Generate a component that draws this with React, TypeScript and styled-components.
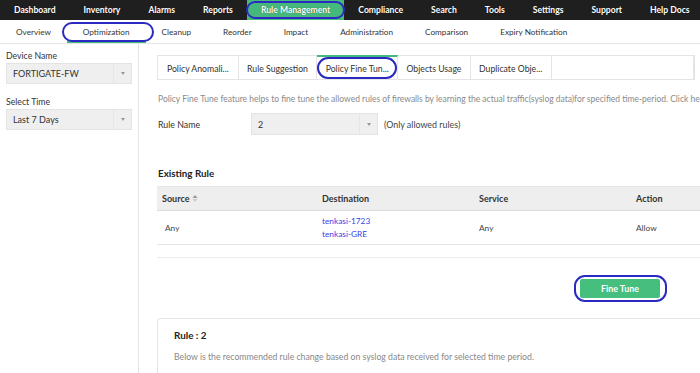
import React from "react";
import styled, { createGlobalStyle, css } from "styled-components";

const GlobalStyle = createGlobalStyle`
  html, body { margin: 0; padding: 0; }
  body {
    width: 700px;
    height: 373px;
    overflow: hidden;
    background: #ffffff;
    font-family: Lato, "Open Sans", sans-serif;
    color: #333;
  }
  * { box-sizing: border-box; }
`;

const ANNOT = "#2a2ac2";

const annotation = (t: number, r: number, b: number, l: number) => css`
  position: relative;
  &::after {
    content: "";
    position: absolute;
    top: ${t}px;
    right: ${r}px;
    bottom: ${b}px;
    left: ${l}px;
    border: 2.5px solid ${ANNOT};
    border-radius: 11px;
    pointer-events: none;
  }
`;

const Page = styled.div`
  width: 700px;
  height: 373px;
  overflow: hidden;
  display: flex;
  flex-direction: column;
`;

const TopNav = styled.nav`
  display: flex;
  height: 20px;
  background: #1f1f1f;
  flex-shrink: 0;
`;

const TopItem = styled.div<{ $active?: boolean }>`
  display: flex;
  align-items: center;
  padding: 0 14px;
  height: 20px;
  font-size: 8.6px;
  font-weight: 700;
  color: #fff;
  white-space: nowrap;
  text-shadow: 0 0 1px rgba(0, 0, 0, 0.6);
  ${(p) =>
    p.$active &&
    css`
      background: #45b97c;
      ${annotation(1, -1, 1, -1)}
    `}
`;

const SubNav = styled.nav`
  display: flex;
  height: 24px;
  background: #fff;
  border-bottom: 1px solid #e6e6e6;
  flex-shrink: 0;
`;

const SubItem = styled.div<{ $active?: boolean }>`
  display: flex;
  align-items: center;
  padding: 2px 16px 0;
  font-size: 8.2px;
  color: #333;
  white-space: nowrap;
  border-bottom: 2px solid transparent;
  ${(p) =>
    p.$active &&
    css`
      border-bottom-color: #45b97c;
      ${annotation(2, -8, -1, -5)}
    `}
`;

const Body = styled.div`
  display: flex;
  flex: 1;
  min-height: 0;
`;

const Sidebar = styled.aside`
  width: 139px;
  flex-shrink: 0;
  border-right: 1px solid #e4e4e4;
  padding: 6px 6px 0 6px;
  display: flex;
  flex-direction: column;
`;

const FieldLabel = styled.div`
  font-size: 8.7px;
  color: #333;
  height: 12px;
  line-height: 12px;
  margin-bottom: 1px;
`;

const SelectBox = styled.div<{ $width?: number; $height?: number; $gap?: number }>`
  display: flex;
  align-items: center;
  height: ${(p) => p.$height ?? 21}px;
  width: ${(p) => (p.$width ? `${p.$width}px` : "100%")};
  background: #efefef;
  border: 1px solid #e3e3e3;
  font-size: 9px;
  color: #333;
  margin-bottom: ${(p) => p.$gap ?? 0}px;
`;

const SelectValue = styled.span`
  flex: 1;
  padding-left: 6px;
  white-space: nowrap;
`;

const Caret = styled.span`
  width: 18px;
  height: 100%;
  display: flex;
  align-items: center;
  justify-content: center;
  border-left: 1px solid #e6e6e6;
  &::before {
    content: "";
    border-left: 2.5px solid transparent;
    border-right: 2.5px solid transparent;
    border-top: 3px solid #999;
  }
`;

const Main = styled.main`
  flex: 1;
  min-width: 0;
  overflow: hidden;
  padding: 11px 0 0 18px;
`;

const Inner = styled.div`
  width: 640px;
`;

const Tabs = styled.div`
  display: flex;
  width: 538px;
  height: 25px;
  border: 1px solid #e4e4e4;
`;

const Tab = styled.div<{ $w: number; $active?: boolean }>`
  width: ${(p) => p.$w}px;
  display: flex;
  align-items: center;
  justify-content: center;
  font-size: 8.7px;
  color: #333;
  white-space: nowrap;
  border-right: 1px solid #e4e4e4;
  border-top: 2px solid transparent;
  margin-top: -1px;
  ${(p) =>
    p.$active &&
    css`
      border-top-color: #45b97c;
      ${annotation(0, 0, 0, 0)}
    `}
`;

const Description = styled.p`
  margin: 14px 0 0 1px;
  font-size: 8.5px;
  line-height: 11px;
  color: #8a8a8a;
  white-space: nowrap;
`;

const RuleRow = styled.div`
  display: flex;
  align-items: center;
  margin-top: 8px;
`;

const RowLabel = styled.div`
  width: 94px;
  font-size: 8.8px;
  color: #333;
  padding-left: 1px;
`;

const Note = styled.span`
  font-size: 8.9px;
  color: #444;
  margin-left: 6px;
`;

const Heading = styled.h3`
  margin: 32px 0 0 1px;
  font-size: 9.8px;
  line-height: 12px;
  font-weight: 700;
  color: #222;
`;

const Table = styled.div`
  margin-top: 7px;
  display: grid;
  grid-template-columns: 160px 157px 157px 166px;
`;

const HeadCell = styled.div`
  height: 25px;
  display: flex;
  align-items: center;
  background: #eeeeee;
  border-top: 1px solid #e6e6e6;
  border-bottom: 1px solid #dcdcdc;
  padding-left: 5px;
  font-size: 9px;
  font-weight: 700;
  color: #333;
`;

const Cell = styled.div<{ $indent?: number }>`
  height: 34px;
  display: flex;
  flex-direction: column;
  justify-content: center;
  gap: 3px;
  padding-left: ${(p) => p.$indent ?? 5}px;
  border-bottom: 1px solid #e4e4e4;
  font-size: 8.3px;
  color: #444;
`;

const LinkText = styled.a`
  color: #3b3fe6;
  text-decoration: none;
  font-size: 8.3px;
`;

const SortIcon = styled.svg`
  margin-left: 3px;
`;

const Separator = styled.div`
  margin-top: 12px;
  height: 1px;
  background: #ececec;
`;

const ActionBar = styled.div`
  display: flex;
  width: 503px;
  justify-content: flex-end;
  margin-top: 21px;
`;

const PrimaryButton = styled.button`
  width: 80px;
  height: 19px;
  border: none;
  border-radius: 2px;
  background: #45be7e;
  color: #fff;
  font-family: inherit;
  font-size: 8.8px;
  font-weight: 700;
  padding: 0;
  ${annotation(-4, -7, -4, -6)}
`;

const Card = styled.section`
  margin-top: 20px;
  border: 1px solid #e4e4e4;
  border-radius: 3px;
  padding: 10px 16px;
  height: 80px;
`;

const CardTitle = styled.div`
  font-size: 9.9px;
  font-weight: 700;
  color: #222;
`;

const CardText = styled.div`
  margin-top: 10px;
  font-size: 8.7px;
  color: #888;
`;

const topItems = [
  "Dashboard",
  "Inventory",
  "Alarms",
  "Reports",
  "Rule Management",
  "Compliance",
  "Search",
  "Tools",
  "Settings",
  "Support",
  "Help Docs",
];

const subItems = [
  "Overview",
  "Optimization",
  "Cleanup",
  "Reorder",
  "Impact",
  "Administration",
  "Comparison",
  "Expiry Notification",
];

const tabs: { label: string; w: number; active?: boolean }[] = [
  { label: "Policy Anomali...", w: 81 },
  { label: "Rule Suggestion", w: 79 },
  { label: "Policy Fine Tun...", w: 81, active: true },
  { label: "Objects Usage", w: 73 },
  { label: "Duplicate Obje...", w: 81 },
  { label: "", w: 143 },
];

export default function App() {
  return (
    <Page>
      <GlobalStyle />
      <TopNav>
        {topItems.map((t) => (
          <TopItem key={t} $active={t === "Rule Management"}>
            {t}
          </TopItem>
        ))}
      </TopNav>
      <SubNav>
        {subItems.map((t) => (
          <SubItem key={t} $active={t === "Optimization"}>
            {t}
          </SubItem>
        ))}
      </SubNav>
      <Body>
        <Sidebar>
          <FieldLabel>Device Name</FieldLabel>
          <SelectBox $gap={12}>
            <SelectValue>FORTIGATE-FW</SelectValue>
            <Caret />
          </SelectBox>
          <FieldLabel>Select Time</FieldLabel>
          <SelectBox>
            <SelectValue>Last 7 Days</SelectValue>
            <Caret />
          </SelectBox>
        </Sidebar>
        <Main>
          <Inner>
            <Tabs>
              {tabs.map((t, i) => (
                <Tab key={i} $w={t.w} $active={t.active}>
                  {t.label}
                </Tab>
              ))}
            </Tabs>
            <Description>
              Policy Fine Tune feature helps to fine tune the allowed rules of firewalls by learning the
              actual traffic(syslog data)for specified time-period. Click here to know more.
            </Description>
            <RuleRow>
              <RowLabel>Rule Name</RowLabel>
              <SelectBox $width={127} $height={22}>
                <SelectValue>2</SelectValue>
                <Caret />
              </SelectBox>
              <Note>(Only allowed rules)</Note>
            </RuleRow>
            <Heading>Existing Rule</Heading>
            <Table>
              <HeadCell>
                Source
                <SortIcon width="6" height="9" viewBox="0 0 6 9">
                  <path d="M3 1 L5.5 4 L0.5 4 Z" fill="#999" />
                  <path d="M3 8 L5.5 5 L0.5 5 Z" fill="#ccc" />
                </SortIcon>
              </HeadCell>
              <HeadCell>Destination</HeadCell>
              <HeadCell>Service</HeadCell>
              <HeadCell>Action</HeadCell>
              <Cell $indent={8}>Any</Cell>
              <Cell>
                <LinkText href="#">tenkasi-1723</LinkText>
                <LinkText href="#">tenkasi-GRE</LinkText>
              </Cell>
              <Cell>Any</Cell>
              <Cell>Allow</Cell>
            </Table>
            <Separator />
            <ActionBar>
              <PrimaryButton>Fine Tune</PrimaryButton>
            </ActionBar>
            <Card>
              <CardTitle>Rule : 2</CardTitle>
              <CardText>
                Below is the recommended rule change based on syslog data received for selected time period.
              </CardText>
            </Card>
          </Inner>
        </Main>
      </Body>
    </Page>
  );
}
